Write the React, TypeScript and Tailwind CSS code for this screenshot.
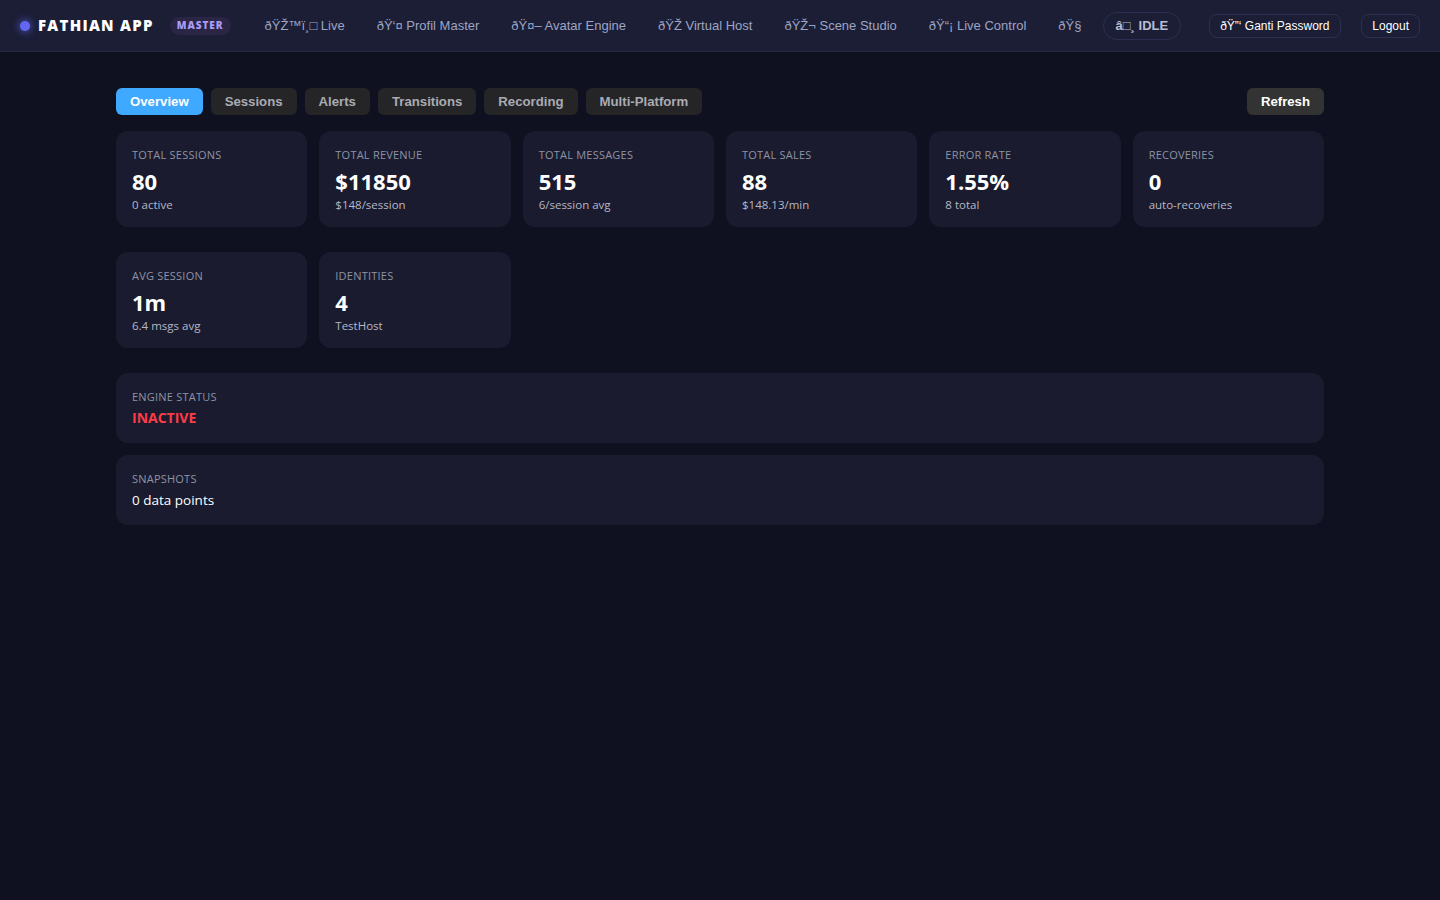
import React, { useState } from "react";

const navLinks = [
  "ðŸŽ™ï¸\u25A1 Live",
  "ðŸ‘¤ Profil Master",
  "ðŸ¤– Avatar Engine",
  "ðŸŽ\u00AD Virtual Host",
  "ðŸŽ¬ Scene Studio",
  "ðŸ“¡ Live Control",
  "ðŸ§",
];

const tabs = ["Overview", "Sessions", "Alerts", "Transitions", "Recording", "Multi-Platform"];

const stats = [
  { label: "Total Sessions", value: "80", sub: "0 active" },
  { label: "Total Revenue", value: "$11850", sub: "$148/session" },
  { label: "Total Messages", value: "515", sub: "6/session avg" },
  { label: "Total Sales", value: "88", sub: "$148.13/min" },
  { label: "Error Rate", value: "1.55%", sub: "8 total" },
  { label: "Recoveries", value: "0", sub: "auto-recoveries" },
];

const stats2 = [
  { label: "Avg Session", value: "1m", sub: "6.4 msgs avg" },
  { label: "Identities", value: "4", sub: "TestHost" },
];

function StatCard({ label, value, sub }: { label: string; value: string; sub: string }) {
  return (
    <div className="bg-[#1a1b2e] rounded-xl h-[96px] px-4 pt-[17px]">
      <div className="text-[11px] uppercase tracking-[0.02em] text-[#8e93a6] leading-[14px]">{label}</div>
      <div className="text-[22px] font-bold text-white leading-[28px] mt-[5px]">{value}</div>
      <div className="text-[11.5px] text-[#b4b8c8] leading-[16px] mt-[2px]">{sub}</div>
    </div>
  );
}

export default function App() {
  const [active, setActive] = useState("Overview");

  return (
    <div className="min-h-screen bg-[#0f1121] text-white" style={{ fontFamily: "'Open Sans', 'Noto Sans', sans-serif" }}>
      {/* top nav */}
      <nav
        className="h-[52px] bg-[#1b1e35] border-b border-[#262a45] flex items-center pl-[20px] pr-[20px] whitespace-nowrap"
        style={{ fontFamily: "'Liberation Sans', Arial, sans-serif" }}
      >
        <div className="flex items-center shrink-0">
          <span className="w-[10px] h-[10px] rounded-full bg-[#6366f1] shadow-[0_0_8px_#6366f1]" />
          <span
            className="ml-[8px] text-[15px] font-extrabold tracking-[0.085em] text-white"
            style={{ fontFamily: "'Open Sans', sans-serif" }}
          >
            FATHIAN APP
          </span>
          <span
            className="ml-[16px] px-[7px] h-[18px] flex items-center rounded-full bg-[#2a2445] text-[#a89cf5] text-[10px] font-extrabold tracking-[0.1em]"
            style={{ fontFamily: "'Open Sans', sans-serif" }}
          >
            MASTER
          </span>
        </div>

        <div className="flex items-center ml-[34px] gap-[32px] text-[13px] text-[#9ea4c4] shrink-0 pt-[1px]">
          {navLinks.map((l) => (
            <span key={l}>{l}</span>
          ))}
        </div>

        <span className="ml-[21px] shrink-0 h-[28px] px-[12px] flex items-center rounded-full border border-[#2b3050] text-[13px] font-bold text-[#b9bdd3]">
          â{"\u25A1"}¸ IDLE
        </span>

        <span className="ml-[28px] shrink-0 h-[24px] px-[10px] flex items-center rounded-lg border border-[#2b3050] text-[12px] text-white">
          ðŸ”‘ Ganti Password
        </span>

        <span className="ml-auto shrink-0 h-[24px] px-[10px] flex items-center rounded-lg border border-[#2b3050] text-[12px] text-white">
          Logout
        </span>
      </nav>

      <main className="w-[1208px] mx-auto pt-[36px]">
        <div className="flex items-center" style={{ fontFamily: "'Liberation Sans', Arial, sans-serif" }}>
          <div className="flex gap-[8px]">
            {tabs.map((t) => (
              <button
                key={t}
                onClick={() => setActive(t)}
                className={
                  t === active
                    ? "h-[27px] px-[14px] pt-[1px] rounded-md bg-[#3fa9ff] text-white text-[13.2px] font-bold"
                    : "h-[27px] px-[14px] pt-[1px] rounded-md bg-[#252527] text-[#a9abb3] text-[13.2px] font-bold"
                }
              >
                {t}
              </button>
            ))}
          </div>
          <button className="ml-auto h-[27px] px-[14px] pt-[1px] rounded-md bg-[#333334] text-white text-[13.2px] font-bold">
            Refresh
          </button>
        </div>

        <div className="grid grid-cols-6 gap-3 mt-[16px]">
          {stats.map((s) => (
            <StatCard key={s.label} {...s} />
          ))}
        </div>

        <div className="grid grid-cols-6 gap-3 mt-[25px]">
          {stats2.map((s) => (
            <StatCard key={s.label} {...s} />
          ))}
        </div>

        <div className="bg-[#1a1b2e] rounded-xl h-[70px] px-4 pt-[17px] mt-[25px]">
          <div className="text-[11px] uppercase tracking-[0.02em] text-[#8e93a6] leading-[14px]">Engine Status</div>
          <div className="text-[14px] font-bold text-[#ff3b47] leading-[20px] mt-[4px]">INACTIVE</div>
        </div>

        <div className="bg-[#1a1b2e] rounded-xl h-[70px] px-4 pt-[17px] mt-[12px]">
          <div className="text-[11px] uppercase tracking-[0.02em] text-[#8e93a6] leading-[14px]">Snapshots</div>
          <div className="text-[13.5px] text-white leading-[20px] mt-[4px]">0 data points</div>
        </div>
      </main>
    </div>
  );
}
